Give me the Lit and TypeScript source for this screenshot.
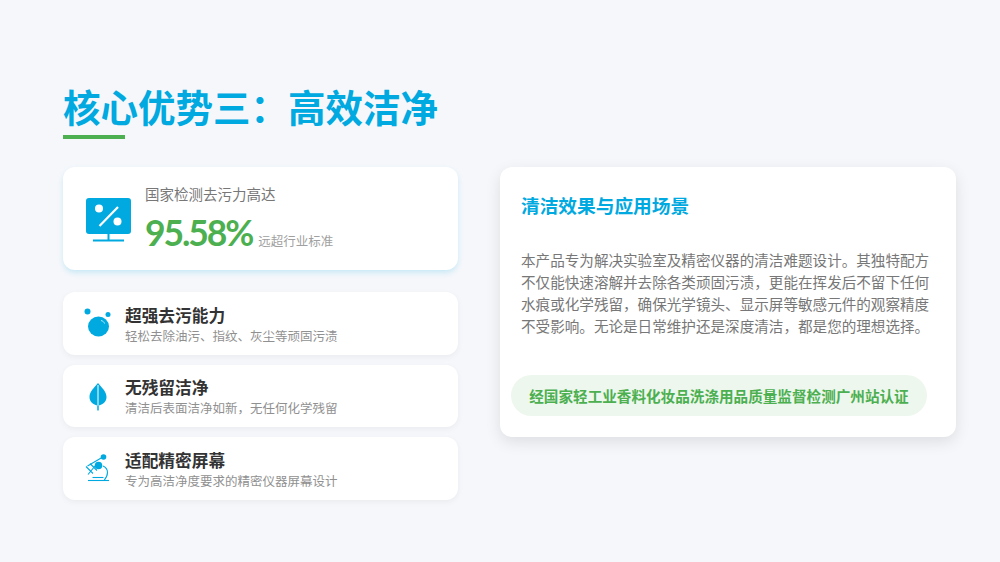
import { LitElement, html, css } from "lit";
import { customElement } from "lit/decorators.js";

const COLON = "\uFF1A";
const COMMA = "\uFF0C";

const monitor = html`<svg viewBox="0 0 48 48" width="48" height="48" aria-hidden="true">
  <path fill="#00a9e0" d="M4 2h39a3 3 0 0 1 3 3v30a3 3 0 0 1-3 3H4a3 3 0 0 1-3-3V5a3 3 0 0 1 3-3z"/>
  <circle cx="14" cy="12.500" r="4" fill="#fff"/><circle cx="32.500" cy="25.500" r="4" fill="#fff"/>
  <path d="M14.500 30 33 11" stroke="#fff" stroke-width="2.200" fill="none"/>
  <path d="M23.500 38v6M8 44.500h31" stroke="#00a9e0" stroke-width="2" fill="none"/>
</svg>`;

const drop = html`<svg viewBox="0 0 30 30" width="30" height="30" aria-hidden="true">
  <circle cx="4.500" cy="3.500" r="3" fill="#00a9e0"/><circle cx="25" cy="6.500" r="2.500" fill="#00a9e0"/>
  <ellipse cx="15.500" cy="18.500" rx="10.500" ry="10" fill="#00a9e0"/>
  <path d="M18 12.500c2 .5 3 1.500 3.500 3" stroke="#bfe9f7" stroke-width="1" fill="none"/>
</svg>`;

const leaf = html`<svg viewBox="0 0 30 30" width="30" height="30" aria-hidden="true">
  <path fill="#00a9e0" d="M15 2C11 7 6.500 10.500 6.500 16c0 4.500 3.500 8 8.500 8.500 5-.5 8.500-4 8.500-8.500C23.500 10.500 19 7 15 2z"/>
  <path d="M15 4v25" stroke="#bfe9f7" stroke-width="1.400" fill="none"/>
  <path d="M15 24.500v5" stroke="#00a9e0" stroke-width="1.400" fill="none"/>
</svg>`;

const scope = html`<svg viewBox="0 0 30 30" width="30" height="30" aria-hidden="true">
  <g fill="none" stroke="#00a9e0" stroke-width="1.100">
    <path d="M5 27.500h21"/>
    <path d="M4.500 13 19 4.500M3 13.500l7 7M7 10.500l7 7M5 21.500 12 13"/>
    <path d="M20 13c3.500 1.500 4.500 4 4.500 6.500s-1 5-3.500 8"/>
    <path d="M9.500 24.500h11"/>
  </g>
  <circle cx="20.500" cy="4" r="2.800" fill="#00a9e0"/>
  <circle cx="15.500" cy="12.500" r="3.800" fill="#00a9e0"/>
</svg>`;

@customElement("app-root")
export class AppRoot extends LitElement {
  static styles = css`
    :host {
      display: block;
      width: 1000px;
      height: 562px;
      box-sizing: border-box;
      padding: 80px 44px 0 63px;
      background: #f5f7fb;
      font-family: "Noto Sans CJK SC", "Noto Sans", sans-serif;
      overflow: hidden;
    }
    .title {
      margin: 0 0 3px;
      font-size: 37.5px;
      line-height: 52px;
      font-weight: 700;
      color: #00a9e0;
    }
    .rule { width: 62px; height: 4px; background: #4caf50; margin-bottom: 28px; }
    .cols { display: flex; gap: 42px; align-items: flex-start; }
    .left { width: 395px; display: flex; flex-direction: column; }
    .card { background: #fff; border-radius: 12px; box-sizing: border-box; }
    .stat {
      height: 103px;
      display: flex;
      align-items: center;
      gap: 12px;
      padding-left: 22px;
      box-shadow: 0 3px 6px -1px rgba(0, 169, 224, 0.22);
      margin-bottom: 22px;
    }
    .stat svg { flex: none; margin-top: 2px; }
    .stat-text { margin-top: 3px; }
    .stat-label { font-size: 14.5px; line-height: 22px; color: #777; }
    .stat-line { display: flex; align-items: baseline; gap: 6px; margin-top: 4px; }
    .num {
      font-family: Lato, sans-serif;
      font-size: 35.5px;
      line-height: 48px;
      font-weight: 700;
      letter-spacing: -2.1px;
      color: #4caf50;
    }
    .note { font-size: 12.5px; color: #a0a0a0; }
    .item {
      height: 62.500px;
      display: flex;
      align-items: center;
      gap: 12px;
      padding-left: 20px;
      margin-bottom: 10px;
      box-shadow: 0 2px 6px rgba(0, 0, 0, 0.05);
    }
    .item svg { flex: none; }
    .item-title { font-size: 16.7px; line-height: 24px; font-weight: 700; color: #333; margin-top: 1px; }
    .item-desc { font-size: 12.5px; line-height: 18px; color: #909090; }
    .right {
      width: 456px;
      height: 270px;
      padding: 24px 21px 0;
      box-shadow: 0 5px 15px rgba(0, 0, 0, 0.1);
    }
    .right h2 {
      margin: 0 0 31px;
      font-size: 18.7px;
      line-height: 27px;
      font-weight: 700;
      color: #00a9e0;
    }
    .right p { margin: 0; font-size: 14.58px; line-height: 22px; color: #777; }
    .badge {
      margin: 38px 0 0 -10px;
      width: 416px;
      height: 41px;
      box-sizing: border-box;
      border-radius: 21px;
      background: #edf7ee;
      display: flex;
      align-items: center;
      justify-content: center;
      font-size: 14.6px;
      font-weight: 700;
      color: #4caf50;
      white-space: nowrap;
    }
  `;

  render() {
    const items = [
      [drop, "超强去污能力", "轻松去除油污、指纹、灰尘等顽固污渍"],
      [leaf, "无残留洁净", "清洁后表面洁净如新" + COMMA + "无任何化学残留"],
      [scope, "适配精密屏幕", "专为高洁净度要求的精密仪器屏幕设计"],
    ] as const;
    const body =
      "本产品专为解决实验室及精密仪器的清洁难题设计。其独特配方不仅能快速溶解并去除各类顽固污渍" +
      COMMA +
      "更能在挥发后不留下任何水痕或化学残留" +
      COMMA +
      "确保光学镜头、显示屏等敏感元件的观察精度不受影响。无论是日常维护还是深度清洁" +
      COMMA +
      "都是您的理想选择。";
    return html`
      <h1 class="title">核心优势三${COLON}高效洁净</h1>
      <div class="rule"></div>
      <div class="cols">
        <div class="left">
          <div class="card stat">
            ${monitor}
            <div class="stat-text">
              <div class="stat-label">国家检测去污力高达</div>
              <div class="stat-line"><span class="num">95.58%</span><span class="note">远超行业标准</span></div>
            </div>
          </div>
          ${items.map(
            ([icon, t, d]) => html`<div class="card item">
              ${icon}
              <div><div class="item-title">${t}</div><div class="item-desc">${d}</div></div>
            </div>`
          )}
        </div>
        <div class="card right">
          <h2>清洁效果与应用场景</h2>
          <p>${body}</p>
          <div class="badge">经国家轻工业香料化妆品洗涤用品质量监督检测广州站认证</div>
        </div>
      </div>
    `;
  }
}
